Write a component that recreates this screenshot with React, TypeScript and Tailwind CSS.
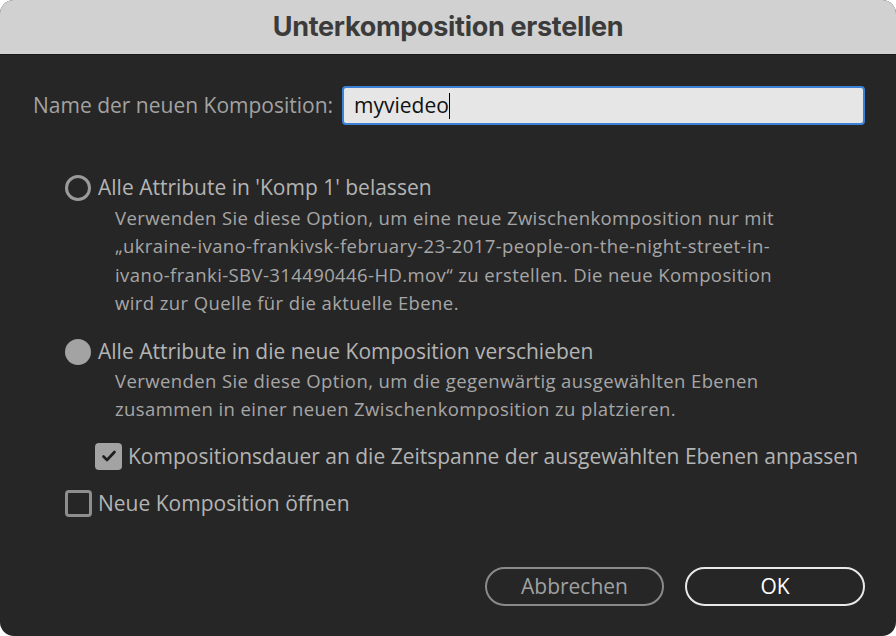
import React from 'react';

const Radio: React.FC<{ checked?: boolean }> = ({ checked }) =>
  checked ? (
    <span className="block w-[26px] h-[26px] rounded-full bg-[#a3a3a3] shrink-0" />
  ) : (
    <span className="block w-[26px] h-[26px] rounded-full border-[3px] border-[#9a9a9a] shrink-0" />
  );

const Checkbox: React.FC<{ checked?: boolean }> = ({ checked }) =>
  checked ? (
    <span className="flex items-center justify-center w-[27px] h-[27px] rounded-[4px] bg-[#a3a3a3] shrink-0">
      <svg width="18" height="18" viewBox="0 0 18 18" fill="none">
        <path d="M3.5 9.5l3.5 3.5 7.5-8" stroke="#1e1e1e" strokeWidth="2.6" strokeLinecap="round" strokeLinejoin="round" />
      </svg>
    </span>
  ) : (
    <span className="block w-[27px] h-[27px] rounded-[4px] border-[3px] border-[#8e8e8e] shrink-0" />
  );

export default function App() {
  return (
    <div className="w-[896px] h-[636px] bg-white" style={{ fontFamily: '"Open Sans", Lato, sans-serif' }}>
      <div className="w-full h-full rounded-[14px] overflow-hidden flex flex-col bg-[#262626]">
        <div className="h-[55px] bg-[#d1d1d1] border-b border-[#1a1a1a] flex items-center justify-center shrink-0">
          <span className="text-[27px] font-bold text-[#3b3b3b] tracking-[-0.3px]" style={{ fontFamily: 'Inter, "Liberation Sans", sans-serif' }}>
            Unterkomposition erstellen
          </span>
        </div>
        <div className="flex-1 flex flex-col pl-[33px] pr-[31px] pt-[31px]">
          <div className="flex items-center">
            <span className="text-[21px] text-[#a2a2a2] w-[309px]">Name der neuen Komposition:</span>
            <div className="flex-1 h-[39px] rounded-[4px] bg-[#e6e6e6] border-2 border-[#3b82d6] flex items-center pl-[10px]">
              <span className="text-[21px] text-[#111]">myviedeo</span>
              <span className="w-[1.5px] h-[26px] bg-black" />
            </div>
          </div>

          <div className="mt-[48px] pl-[32px] flex flex-col">
            <div className="flex items-center gap-[7px] h-[30px]">
              <Radio />
              <span className="text-[21px] text-[#b4b4b4]">Alle Attribute in 'Komp 1' belassen</span>
            </div>
            <p className="pl-[50px] text-[18.5px] tracking-[0.4px] leading-[28.4px] text-[#a6a6a6] w-[800px] mt-[1px]">
              Verwenden Sie diese Option, um eine neue Zwischenkomposition nur mit<br />
              „ukraine-ivano-frankivsk-february-23-2017-people-on-the-night-street-in-<br />
              ivano-franki-SBV-314490446-HD.mov“ zu erstellen. Die neue Komposition<br />
              wird zur Quelle für die aktuelle Ebene.
            </p>

            <div className="flex items-center gap-[7px] h-[30px] mt-[19px]">
              <Radio checked />
              <span className="text-[21px] text-[#b4b4b4]">Alle Attribute in die neue Komposition verschieben</span>
            </div>
            <p className="pl-[50px] text-[18.5px] tracking-[0.4px] leading-[28.4px] text-[#a6a6a6]">
              Verwenden Sie diese Option, um die gegenwärtig ausgewählten Ebenen<br />
              zusammen in einer neuen Zwischenkomposition zu platzieren.
            </p>

            <div className="flex items-center gap-[6px] h-[30px] mt-[18px] pl-[30px]">
              <Checkbox checked />
              <span className="text-[21px] text-[#b4b4b4]">Kompositionsdauer an die Zeitspanne der ausgewählten Ebenen anpassen</span>
            </div>

            <div className="flex items-center gap-[6px] h-[30px] mt-[17px]">
              <Checkbox />
              <span className="text-[21px] text-[#b4b4b4]">Neue Komposition öffnen</span>
            </div>
          </div>

          <div className="mt-auto mb-[30px] flex justify-end gap-[21px]">
            <button className="w-[179px] h-[39px] rounded-[20px] border-2 border-[#8a8a8a] text-[21px] text-[#a0a0a0]">
              Abbrechen
            </button>
            <button className="w-[180px] h-[39px] rounded-[20px] border-2 border-[#e8e8e8] text-[21px] text-white">
              OK
            </button>
          </div>
        </div>
      </div>
    </div>
  );
}
